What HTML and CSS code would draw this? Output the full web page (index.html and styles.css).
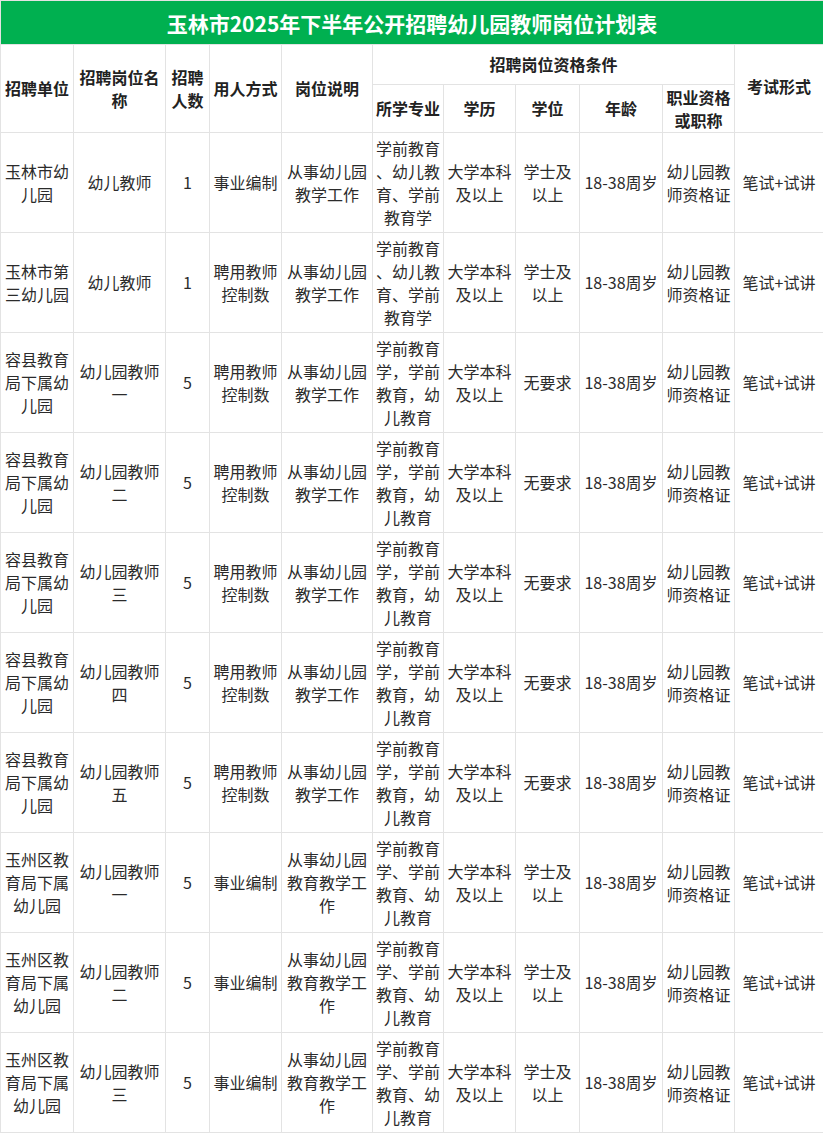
FILE: index.html
```html
<!DOCTYPE html>
<html lang="zh">
<head>
<meta charset="utf-8">
<link rel="stylesheet" href="styles.css">
</head>
<body>
<table class="plan">
<colgroup>
<col class="c1"><col class="c2"><col class="c3"><col class="c4"><col class="c5"><col class="c6"><col class="c7"><col class="c8"><col class="c9"><col class="c10"><col class="c11">
</colgroup>
<thead>
<tr class="title-row"><td colspan="11" class="title">玉林市2025年下半年公开招聘幼儿园教师岗位计划表</td></tr>
<tr class="h1">
<th rowspan="2">招聘单位</th>
<th rowspan="2">招聘岗位名<br>称</th>
<th rowspan="2">招聘<br>人数</th>
<th rowspan="2">用人方式</th>
<th rowspan="2">岗位说明</th>
<th colspan="5" class="group">招聘岗位资格条件</th>
<th rowspan="2" class="exam">考试形式</th>
</tr>
<tr class="h2">
<th>所学专业</th>
<th>学历</th>
<th>学位</th>
<th>年龄</th>
<th>职业资格<br>或职称</th>
</tr>
</thead>
<tbody>
<tr><td>玉林市幼<br>儿园</td><td>幼儿教师</td><td>1</td><td>事业编制</td><td>从事幼儿园<br>教学工作</td><td>学前教育<br>、幼儿教<br>育、学前<br>教育学</td><td>大学本科<br>及以上</td><td>学士及<br>以上</td><td>18-38周岁</td><td>幼儿园教<br>师资格证</td><td>笔试+试讲</td></tr>
<tr><td>玉林市第<br>三幼儿园</td><td>幼儿教师</td><td>1</td><td>聘用教师<br>控制数</td><td>从事幼儿园<br>教学工作</td><td>学前教育<br>、幼儿教<br>育、学前<br>教育学</td><td>大学本科<br>及以上</td><td>学士及<br>以上</td><td>18-38周岁</td><td>幼儿园教<br>师资格证</td><td>笔试+试讲</td></tr>
<tr><td>容县教育<br>局下属幼<br>儿园</td><td>幼儿园教师<br>一</td><td>5</td><td>聘用教师<br>控制数</td><td>从事幼儿园<br>教学工作</td><td>学前教育<br>学，学前<br>教育，幼<br>儿教育</td><td>大学本科<br>及以上</td><td>无要求</td><td>18-38周岁</td><td>幼儿园教<br>师资格证</td><td>笔试+试讲</td></tr>
<tr><td>容县教育<br>局下属幼<br>儿园</td><td>幼儿园教师<br>二</td><td>5</td><td>聘用教师<br>控制数</td><td>从事幼儿园<br>教学工作</td><td>学前教育<br>学，学前<br>教育，幼<br>儿教育</td><td>大学本科<br>及以上</td><td>无要求</td><td>18-38周岁</td><td>幼儿园教<br>师资格证</td><td>笔试+试讲</td></tr>
<tr><td>容县教育<br>局下属幼<br>儿园</td><td>幼儿园教师<br>三</td><td>5</td><td>聘用教师<br>控制数</td><td>从事幼儿园<br>教学工作</td><td>学前教育<br>学，学前<br>教育，幼<br>儿教育</td><td>大学本科<br>及以上</td><td>无要求</td><td>18-38周岁</td><td>幼儿园教<br>师资格证</td><td>笔试+试讲</td></tr>
<tr><td>容县教育<br>局下属幼<br>儿园</td><td>幼儿园教师<br>四</td><td>5</td><td>聘用教师<br>控制数</td><td>从事幼儿园<br>教学工作</td><td>学前教育<br>学，学前<br>教育，幼<br>儿教育</td><td>大学本科<br>及以上</td><td>无要求</td><td>18-38周岁</td><td>幼儿园教<br>师资格证</td><td>笔试+试讲</td></tr>
<tr><td>容县教育<br>局下属幼<br>儿园</td><td>幼儿园教师<br>五</td><td>5</td><td>聘用教师<br>控制数</td><td>从事幼儿园<br>教学工作</td><td>学前教育<br>学，学前<br>教育，幼<br>儿教育</td><td>大学本科<br>及以上</td><td>无要求</td><td>18-38周岁</td><td>幼儿园教<br>师资格证</td><td>笔试+试讲</td></tr>
<tr><td>玉州区教<br>育局下属<br>幼儿园</td><td>幼儿园教师<br>一</td><td>5</td><td>事业编制</td><td>从事幼儿园<br>教育教学工<br>作</td><td>学前教育<br>学、学前<br>教育、幼<br>儿教育</td><td>大学本科<br>及以上</td><td>学士及<br>以上</td><td>18-38周岁</td><td>幼儿园教<br>师资格证</td><td>笔试+试讲</td></tr>
<tr><td>玉州区教<br>育局下属<br>幼儿园</td><td>幼儿园教师<br>二</td><td>5</td><td>事业编制</td><td>从事幼儿园<br>教育教学工<br>作</td><td>学前教育<br>学、学前<br>教育、幼<br>儿教育</td><td>大学本科<br>及以上</td><td>学士及<br>以上</td><td>18-38周岁</td><td>幼儿园教<br>师资格证</td><td>笔试+试讲</td></tr>
<tr><td>玉州区教<br>育局下属<br>幼儿园</td><td>幼儿园教师<br>三</td><td>5</td><td>事业编制</td><td>从事幼儿园<br>教育教学工<br>作</td><td>学前教育<br>学、学前<br>教育、幼<br>儿教育</td><td>大学本科<br>及以上</td><td>学士及<br>以上</td><td>18-38周岁</td><td>幼儿园教<br>师资格证</td><td>笔试+试讲</td></tr>
</tbody>
</table>
</body>
</html>
```

FILE: styles.css
```css
html, body {
  margin: 0;
  padding: 0;
  background: #ffffff;
}
body {
  font-family: "Noto Sans CJK SC", "Noto Sans", sans-serif;
  color: #2b2b2b;
}
.plan {
  width: 823px;
  table-layout: fixed;
  border-collapse: collapse;
  font-size: 16px;
  line-height: 23px;
}
.c1 { width: 73px; }
.c2 { width: 92px; }
.c3 { width: 44px; }
.c4 { width: 72px; }
.c5 { width: 91px; }
.c6 { width: 71px; }
.c7 { width: 72px; }
.c8 { width: 64px; }
.c9 { width: 83px; }
.c10 { width: 72px; }
.c11 { width: 89px; }
.plan td, .plan th {
  border: 1px solid #e3e3e3;
  padding: 0 2px;
  text-align: center;
  vertical-align: middle;
  white-space: nowrap;
  overflow: hidden;
}
.plan th {
  font-weight: bold;
  color: #222;
}
.title-row { height: 44px; }
.plan td.title {
  background: #00b050;
  color: #ffffff;
  font-size: 21px;
  font-weight: bold;
  line-height: 28px;
}
.h1 { height: 40px; }
.h2 { height: 48px; }
.plan th.exam { padding-bottom: 4px; }
.plan tbody tr { height: 100px; }
```
